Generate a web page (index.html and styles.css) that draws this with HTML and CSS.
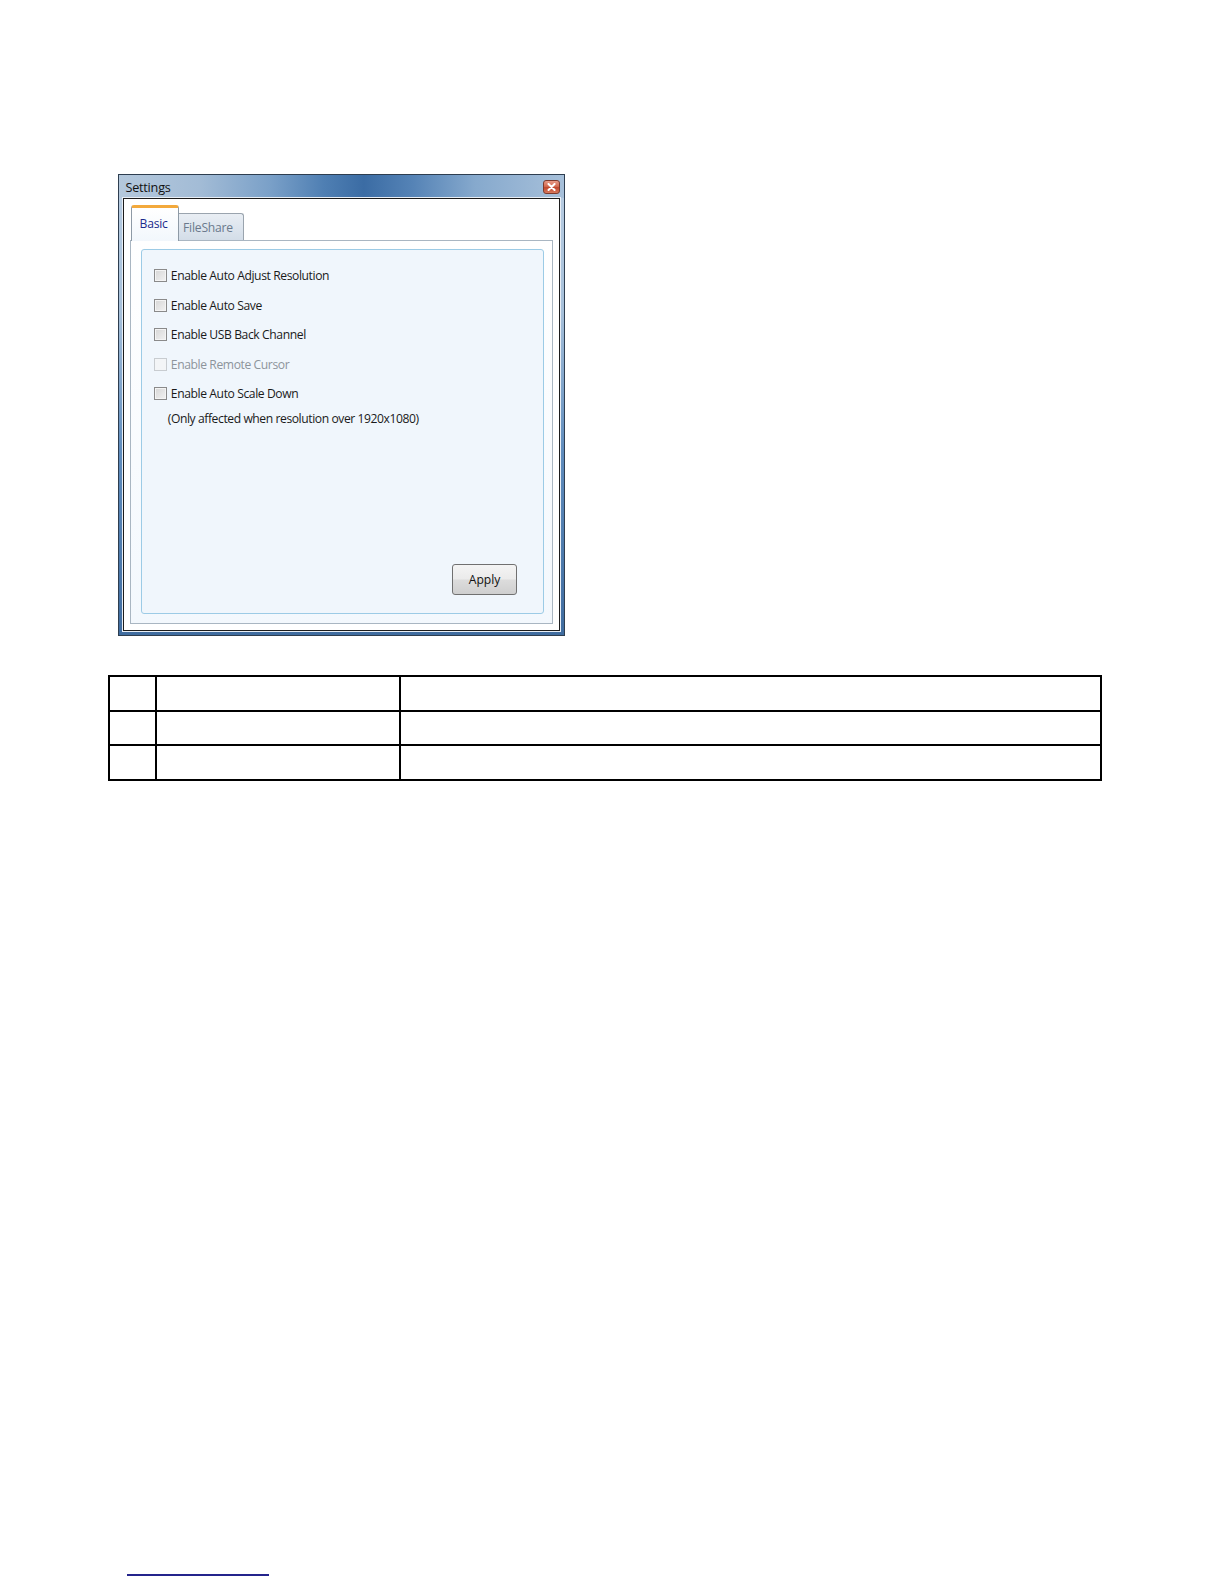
FILE: index.html
```html
<!DOCTYPE html>
<html>
<head>
<meta charset="utf-8">
<link rel="stylesheet" href="styles.css">
</head>
<body>
<div class="page">
  <div class="window">
    <div class="titlebar">
      <span class="title">Settings</span>
      <span class="close"><svg width="9" height="8" viewBox="0 0 9 8"><path d="M1.5 1 L7.5 7 M7.5 1 L1.5 7" stroke="#fff" stroke-width="2" stroke-linecap="round"/></svg></span>
    </div>
    <div class="client">
      <div class="tabs">
        <div class="tab tab-active">Basic</div>
        <div class="tab tab-idle">FileShare</div>
      </div>
      <div class="panel">
        <div class="group">
          <label class="row"><span class="box"></span>Enable Auto Adjust Resolution</label>
          <label class="row"><span class="box"></span>Enable Auto Save</label>
          <label class="row"><span class="box"></span>Enable USB Back Channel</label>
          <label class="row row-disabled"><span class="box box-disabled"></span>Enable Remote Cursor</label>
          <label class="row"><span class="box"></span>Enable Auto Scale Down</label>
          <div class="note">(Only affected when resolution over 1920x1080)</div>
          <div class="actions"><button class="apply">Apply</button></div>
        </div>
      </div>
    </div>
  </div>

  <table class="grid">
    <tr><td class="c1"></td><td class="c2"></td><td class="c3"></td></tr>
    <tr><td class="c1"></td><td class="c2"></td><td class="c3"></td></tr>
    <tr><td class="c1"></td><td class="c2"></td><td class="c3"></td></tr>
  </table>

  <div class="footrule"></div>
</div>
</body>
</html>
```

FILE: styles.css
```css
html, body {
  margin: 0;
  padding: 0;
  background: #ffffff;
  overflow: hidden;
}
.page {
  zoom: 1.0115;
  padding-top: 172px;
  font-family: "Open Sans", "Noto Sans", "DejaVu Sans", sans-serif;
}
.window {
  margin-left: 117px;
  width: 442px;
  height: 457px;
  box-sizing: border-box;
  border: 1px solid #2e3e50;
  padding: 0 4px 4px 4px;
  background: linear-gradient(180deg, #b9cde2 0%, #a6c0da 30%, #5f8cbd 60%, #3f6c9f 100%);
  display: flex;
  flex-direction: column;
}
.titlebar {
  height: 23px;
  margin: 0 -4px;
  padding: 0 4px 0 6px;
  display: flex;
  align-items: center;
  justify-content: space-between;
  background: linear-gradient(90deg, #b4c8dc 0%, #a3bcd6 18%, #7aa0c8 34%, #4f7fb3 46%, #3b6ca4 55%, #5583b6 66%, #86a9cd 80%, #a7c0da 100%);
}
.title {
  font-size: 12.5px;
  color: #111;
  letter-spacing: -0.2px;
}
.close {
  width: 17px;
  height: 14px;
  box-sizing: border-box;
  border: 1px solid #7d3a2c;
  border-radius: 3px;
  background: linear-gradient(180deg, #e89a86 0%, #d26a50 45%, #c0472d 55%, #d87a5e 100%);
  display: flex;
  align-items: center;
  justify-content: center;
}
.client {
  flex: 1;
  border: 1px solid #1c1c1c;
  background: #ffffff;
  box-shadow: 0 0 0 1px #e8eef5;
  padding: 6px;
  display: flex;
  flex-direction: column;
}
.tabs {
  display: flex;
  align-items: flex-end;
  height: 34px;
  padding-left: 1px;
}
.tab {
  font-size: 12px;
  box-sizing: border-box;
  letter-spacing: -0.2px;
}
.tab-active {
  width: 47px;
  height: 35px;
  margin-bottom: -1px;
  border: 1px solid #8e9aa6;
  border-top: 3px solid #f3a93c;
  border-bottom: none;
  border-radius: 3px 3px 0 0;
  background: linear-gradient(180deg, #ffffff 0%, #f2f7fc 100%);
  color: #1a2a8c;
  padding: 7px 0 0 7px;
  position: relative;
  z-index: 1;
}
.tab-idle {
  width: 64px;
  height: 26px;
  border: 1px solid #9aa4ae;
  border-left: none;
  border-bottom: none;
  border-radius: 0 3px 0 0;
  background: linear-gradient(180deg, #e9eef4 0%, #d3dde8 100%);
  color: #6b7a8c;
  padding: 5px 0 0 4px;
}
.panel {
  flex: 1;
  border: 1px solid #a9b6c2;
  background: linear-gradient(180deg, #ffffff 0%, #f3f8fd 100%);
  padding: 8px 8px 9px 9px;
  display: flex;
}
.group {
  flex: 1;
  border: 1px solid #9ccbe6;
  border-radius: 3px;
  background: #f0f6fc;
  padding: 11px 26px 18px 12px;
  display: flex;
  flex-direction: column;
}
.row {
  display: flex;
  align-items: center;
  height: 29.2px;
  font-size: 12px;
  color: #1a1a1a;
  letter-spacing: -0.4px;
}
.row-disabled {
  color: #8d949b;
}
.box {
  width: 13px;
  height: 13px;
  box-sizing: border-box;
  border: 1px solid #8a8a8a;
  background: linear-gradient(135deg, #d6d6d6 0%, #f2f2f2 100%);
  box-shadow: inset 0 0 0 1px #f4f4f4;
  margin-right: 4px;
  flex: none;
}
.box-disabled {
  border-color: #c8ccd0;
  background: #f3f5f7;
  box-shadow: none;
}
.note {
  font-size: 12px;
  color: #1a1a1a;
  letter-spacing: -0.42px;
  margin-left: 14px;
  margin-top: 1px;
  line-height: 17px;
}
.actions {
  margin-top: auto;
  display: flex;
  justify-content: flex-end;
}
.apply {
  width: 64px;
  height: 30px;
  border: 1px solid #707070;
  border-radius: 3px;
  background: linear-gradient(180deg, #f4f4f4 0%, #ebebeb 48%, #dcdcdc 52%, #cfcfcf 100%);
  font-family: "Open Sans", "Noto Sans", sans-serif;
  font-size: 12px;
  color: #111;
  padding: 0;
}
.grid {
  margin-top: 38px;
  margin-left: 107px;
  width: 982px;
  border-collapse: collapse;
}
.grid td {
  border: 2px solid #000;
  height: 32.5px;
  padding: 0;
}
.c1 { width: 44px; }
.c2 { width: 240px; }
.footrule {
  margin-top: 784px;
  margin-left: 126px;
  width: 140px;
  height: 2px;
  background: #24248c;
}
```
